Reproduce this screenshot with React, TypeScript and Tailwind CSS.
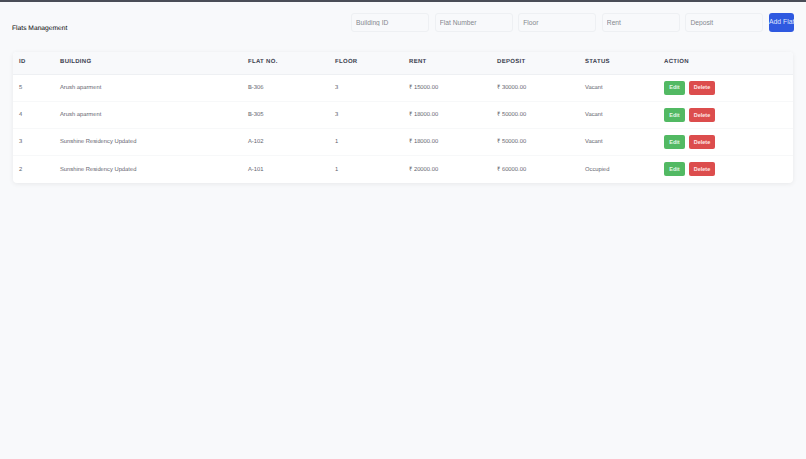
const flats = [
  { id: 5, building: 'Arush aparment', flat: 'B-306', floor: 3, rent: '₹ 15000.00', deposit: '₹ 30000.00', status: 'Vacant' },
  { id: 4, building: 'Arush aparment', flat: 'B-305', floor: 3, rent: '₹ 18000.00', deposit: '₹ 50000.00', status: 'Vacant' },
  { id: 3, building: 'Sunshine Residency Updated', flat: 'A-102', floor: 1, rent: '₹ 18000.00', deposit: '₹ 50000.00', status: 'Vacant' },
  { id: 2, building: 'Sunshine Residency Updated', flat: 'A-101', floor: 1, rent: '₹ 20000.00', deposit: '₹ 60000.00', status: 'Occupied' },
]

const fields = ['Building ID', 'Flat Number', 'Floor', 'Rent', 'Deposit']
const headers = ['ID', 'Building', 'Flat No.', 'Floor', 'Rent', 'Deposit', 'Status', 'Action']

export default function App() {
  return (
    <div className="h-[459px] overflow-hidden bg-[#f8f9fb] font-['Liberation_Sans',Arial,sans-serif] [text-rendering:geometricPrecision]">
      <div className="h-[2px] bg-[#4a4d57]" />

      {/* Header */}
      <div className="flex items-start justify-between px-[12px] pt-[11px]">
        <h1 className="mt-[6px] text-[6.7px] font-normal leading-[20px] text-black">Flats Management</h1>
        <div className="flex gap-[5.6px]">
          {fields.map((field) => (
            <input
              key={field}
              placeholder={field}
              className="h-[19px] w-[78px] rounded-[3px] border border-[#eef0f3] bg-[#f8f9fb] px-[4px] text-[6.7px] outline-none placeholder:text-[#85888e]"
            />
          ))}
          <button className="h-[19px] w-[25px] whitespace-nowrap rounded-[3px] bg-[#2f59e0] text-left text-[6.8px] text-[#dfe6ff]">
            Add Flat
          </button>
        </div>
      </div>

      {/* Table */}
      <div className="mx-[13px] mt-[13px] overflow-hidden rounded-[4px] bg-white shadow-[0_1px_5px_rgba(0,0,0,0.07)]">
        <table className="w-full table-fixed border-collapse text-left">
          <colgroup>
            <col className="w-[41px]" />
            <col className="w-[188px]" />
            <col className="w-[87px]" />
            <col className="w-[74px]" />
            <col className="w-[88px]" />
            <col className="w-[88px]" />
            <col className="w-[79px]" />
            <col />
          </colgroup>
          <thead>
            <tr className="h-[22px] border-b border-[#eef0f3] bg-[#f8f9fb]">
              {headers.map((header) => (
                <th key={header} className="px-[6px] text-[6px] font-bold uppercase tracking-[0.3px] text-[#3d4250]">
                  {header}
                </th>
              ))}
            </tr>
          </thead>
          <tbody>
            {flats.map((flat) => (
              <tr key={flat.id} className="h-[27.2px] border-b border-[#f7f8f9] text-[5.8px] text-[#5f636d] last:border-b-0">
                <td className="px-[6px] pt-[1px]">{flat.id}</td>
                <td className="px-[6px] pt-[1px]">{flat.building}</td>
                <td className="px-[6px] pt-[1px]">{flat.flat}</td>
                <td className="px-[6px] pt-[1px]">{flat.floor}</td>
                <td className="px-[6px] pt-[1px]">{flat.rent}</td>
                <td className="px-[6px] pt-[1px]">{flat.deposit}</td>
                <td className="px-[6px] pt-[1px]">{flat.status}</td>
                <td className="px-[6px]">
                  <div className="flex gap-[4px]">
                    <button className="h-[14px] w-[21px] rounded-[2px] bg-[#52b963] text-[5.5px] font-bold text-[#e3f7e7]">Edit</button>
                    <button className="h-[14px] w-[26px] rounded-[2px] bg-[#dc4d4d] text-[5.5px] font-bold text-[#ffe6e6]">Delete</button>
                  </div>
                </td>
              </tr>
            ))}
          </tbody>
        </table>
      </div>
    </div>
  )
}
